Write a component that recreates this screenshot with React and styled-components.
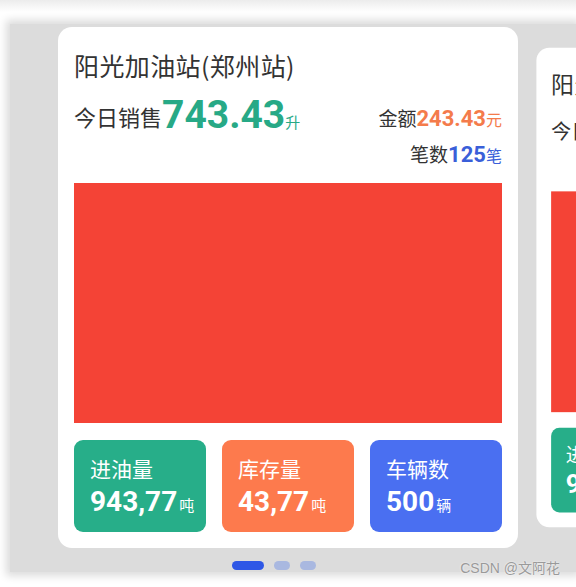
import React from "react";
import styled, { createGlobalStyle } from "styled-components";

const GlobalStyle = createGlobalStyle`
  body {
    margin: 0;
    background: #ffffff;
    font-family: Roboto, "Noto Sans CJK SC", sans-serif;
  }
`;

const Page = styled.div`
  position: relative;
  width: 576px;
  height: 587px;
  overflow: hidden;
  background: #ffffff;
`;

const TopFade = styled.div`
  height: 12px;
  background: linear-gradient(#ececec, #ffffff);
`;

const Panel = styled.div`
  margin: 12px 0 0 10px;
  height: 548px;
  background: #dcdcdc;
  box-shadow: 0 0 8px 4px #dcdcdc;
`;

const Track = styled.div`
  display: flex;
  padding: 3px 0 0 48px;
`;

const Card = styled.div`
  flex: 0 0 460px;
  height: 521px;
  box-sizing: border-box;
  padding: 16px;
  background: #ffffff;
  border-radius: 14px;
  display: flex;
  flex-direction: column;
  transform: scale(${(p) => (p.active ? 1 : 0.92)});
`;

const Title = styled.div`
  margin-top: 6px;
  font-family: "Noto Sans CJK SC", sans-serif;
  font-size: 25px;
  line-height: 32px;
  color: #333333;
  letter-spacing: 0.4px;
`;

const SalesRow = styled.div`
  margin-top: 20px;
  display: flex;
  justify-content: space-between;
  align-items: flex-start;
`;

const Line = styled.div`
  height: 36px;
  display: flex;
  align-items: ${(p) => (p.right ? "baseline" : "center")};
  justify-content: ${(p) => (p.right ? "flex-end" : "flex-start")};
  line-height: 36px;
`;

const Figure = styled.span`
  display: flex;
  align-items: baseline;
`;

const Label = styled.span`
  font-size: ${(p) => p.size}px;
  color: #333333;
`;

const Num = styled.span`
  font-size: ${(p) => p.size}px;
  font-weight: 700;
  color: ${(p) => p.color};
`;

const Unit = styled.span`
  font-size: ${(p) => p.size}px;
  color: ${(p) => p.color};
`;

const Chart = styled.div`
  margin-top: 10px;
  height: 240px;
  background: #f44336;
`;

const Stats = styled.div`
  margin-top: 17px;
  display: grid;
  grid-template-columns: repeat(3, minmax(0, 1fr));
  gap: 16px;
`;

const StatBox = styled.div`
  height: 92px;
  box-sizing: border-box;
  padding: 16px;
  border-radius: 9px;
  background: ${(p) => p.bg};
  color: #ffffff;
`;

const StatLabel = styled.div`
  font-size: 21px;
  line-height: 28px;
`;

const StatValue = styled.div`
  line-height: 36px;
  display: flex;
  align-items: baseline;
  white-space: nowrap;
`;

const StatNum = styled.span`
  font-size: 28px;
  font-weight: 700;
`;

const StatUnit = styled.span`
  font-size: 15px;
  margin-left: 2px;
`;

const Dots = styled.div`
  display: flex;
  gap: 10px;
  padding-left: 222px;
  margin-top: 13px;
`;

const Dot = styled.div`
  width: ${(p) => (p.active ? 32 : 16)}px;
  height: 9px;
  border-radius: 5px;
  background: ${(p) => (p.active ? "#2e57e6" : "#a9b8e0")};
`;

const Watermark = styled.div`
  position: absolute;
  right: 16px;
  bottom: 10px;
  font-family: "Liberation Sans", "Noto Sans CJK SC", sans-serif;
  font-size: 14px;
  color: #9a9a9a;
  text-shadow: 0 0 2px #ffffff;
`;

const GREEN = "#27a986";
const ORANGE = "#f47b4b";
const BLUE = "#3a5fd9";

const stats = [
  { label: "进油量", value: "943,77", unit: "吨", bg: "#27ae89" },
  { label: "库存量", value: "43,77", unit: "吨", bg: "#fd7a4d" },
  { label: "车辆数", value: "500", unit: "辆", bg: "#4a6ff1" },
];

const StationCard = ({ active }) => (
  <Card active={active}>
    <Title>阳光加油站(郑州站)</Title>
    <SalesRow>
      <Line>
        <Label size={22}>今日销售</Label>
        <Figure>
          <Num size={39} color={GREEN}>743.43</Num>
          <Unit size={15} color={GREEN}>升</Unit>
        </Figure>
      </Line>
      <div>
        <Line right>
          <Label size={19}>金额</Label>
          <Num size={22} color={ORANGE}>243.43</Num>
          <Unit size={16} color={ORANGE}>元</Unit>
        </Line>
        <Line right>
          <Label size={19}>笔数</Label>
          <Num size={22} color={BLUE}>125</Num>
          <Unit size={16} color={BLUE}>笔</Unit>
        </Line>
      </div>
    </SalesRow>
    <Chart />
    <Stats>
      {stats.map((s) => (
        <StatBox key={s.label} bg={s.bg}>
          <StatLabel>{s.label}</StatLabel>
          <StatValue>
            <StatNum>{s.value}</StatNum>
            <StatUnit>{s.unit}</StatUnit>
          </StatValue>
        </StatBox>
      ))}
    </Stats>
  </Card>
);

export default function App() {
  return (
    <Page>
      <GlobalStyle />
      <TopFade />
      <Panel>
        <Track>
          <StationCard active />
          <StationCard />
        </Track>
        <Dots>
          <Dot active />
          <Dot />
          <Dot />
        </Dots>
      </Panel>
      <Watermark>CSDN @文阿花</Watermark>
    </Page>
  );
}
